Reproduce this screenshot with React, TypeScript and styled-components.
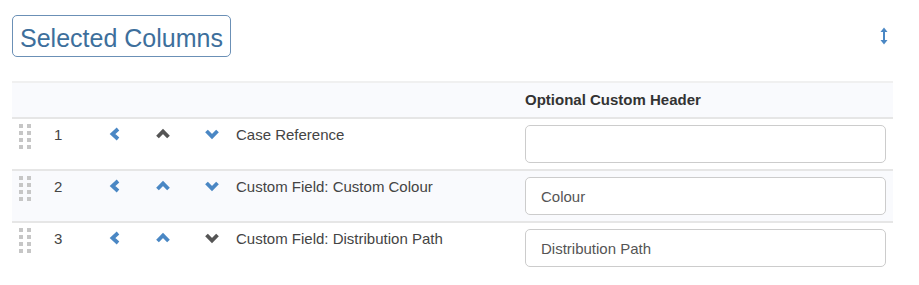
import React from "react";
import styled, { createGlobalStyle } from "styled-components";

const GlobalStyle = createGlobalStyle`
  html, body {
    margin: 0;
    padding: 0;
    background: #ffffff;
    font-family: "Liberation Sans", Arial, Helvetica, sans-serif;
    color: #333333;
  }
`;

const BLUE = "#4a87c4";
const GRAY = "#555555";
const COLS = "26px 62px 30px 66px 32px 290px 375px";

const Page = styled.div`
  width: 881px;
  padding: 15px 0 0 12px;
`;

const TopBar = styled.div`
  display: flex;
  justify-content: space-between;
  align-items: center;
  margin-bottom: 24px;
`;

const Title = styled.h2`
  margin: 0;
  display: inline-block;
  box-sizing: border-box;
  height: 42px;
  padding: 8px 7px 4px 7px;
  border: 1px solid #6b90b6;
  border-radius: 5px;
  font-size: 25px;
  line-height: 28px;
  font-weight: normal;
  color: #3d6f9c;
  white-space: nowrap;
`;

const ResizeButton = styled.span`
  display: flex;
  margin-right: 5px;
`;

const Table = styled.div`
  display: flex;
  flex-direction: column;
`;

const HeaderRow = styled.div`
  display: grid;
  grid-template-columns: ${COLS};
  border-top: 2px solid #f0f0f0;
  border-bottom: 2px solid #e6e6e6;
  background: #f9fafd;
  height: 34px;
  align-items: center;
`;

const HeaderCell = styled.div`
  grid-column: 7;
  padding: 0 7px;
  font-size: 15px;
  line-height: 20px;
  font-weight: bold;
  color: #333333;
`;

const Row = styled.div<{ $striped?: boolean }>`
  display: grid;
  grid-template-columns: ${COLS};
  height: 50px;
  align-items: start;
  background: ${(p) => (p.$striped ? "#f9fafd" : "#ffffff")};
  & + & {
    border-top: 2px solid #e6e6e6;
  }
`;

const HandleCell = styled.div`
  display: flex;
  justify-content: center;
  padding-top: 5px;
`;

const Dots = styled.div`
  display: grid;
  grid-template-columns: 4px 4px;
  grid-auto-rows: 4px;
  column-gap: 4px;
  row-gap: 3px;
`;

const Dot = styled.span`
  background: #c6c6c6;
`;

const NumberCell = styled.div`
  padding: 6px 0 0 16px;
  font-size: 15px;
  line-height: 20px;
  color: #444444;
`;

const IconCell = styled.div`
  display: flex;
  justify-content: center;
  padding-top: 7px;
`;

const NameCell = styled.div`
  padding: 6px 0 0 8px;
  font-size: 15px;
  line-height: 20px;
  color: #444444;
  white-space: nowrap;
`;

const InputCell = styled.div`
  padding: 6px 7px;
`;

const HeaderInput = styled.input`
  display: block;
  box-sizing: border-box;
  width: 100%;
  height: 38px;
  margin: 0;
  padding: 0 15px;
  border: 1px solid #cccccc;
  border-radius: 5px;
  background: #ffffff;
  font-family: "Liberation Sans", Arial, Helvetica, sans-serif;
  font-size: 15px;
  color: #555555;
  outline: none;
`;

type Dir = "left" | "up" | "down";

const chevronPoints: Record<Dir, string> = {
  left: "11,3 5.5,8 11,13",
  up: "2.5,11 8,5.5 13.5,11",
  down: "2.5,5 8,10.5 13.5,5",
};

const Chevron: React.FC<{ dir: Dir; active: boolean }> = ({ dir, active }) => (
  <svg width="16" height="16" viewBox="0 0 16 16" aria-hidden="true">
    <polyline
      points={chevronPoints[dir]}
      fill="none"
      stroke={active ? BLUE : GRAY}
      strokeWidth={3.8}
      strokeLinejoin="miter"
      strokeLinecap="butt"
    />
  </svg>
);

const ResizeIcon: React.FC = () => (
  <svg width="8" height="18" viewBox="0 0 8 18" aria-hidden="true">
    <rect x="3" y="4" width="2" height="10" fill={BLUE} />
    <polygon points="0.5,5 4,0.5 7.5,5" fill={BLUE} />
    <polygon points="0.5,13 4,17.5 7.5,13" fill={BLUE} />
  </svg>
);

const columns = [
  { n: 1, name: "Case Reference", header: "", canUp: false, canDown: true },
  { n: 2, name: "Custom Field: Custom Colour", header: "Colour", canUp: true, canDown: true },
  { n: 3, name: "Custom Field: Distribution Path", header: "Distribution Path", canUp: true, canDown: false },
];

export default function App() {
  return (
    <>
      <GlobalStyle />
      <Page>
        <TopBar>
          <Title>Selected Columns</Title>
          <ResizeButton>
            <ResizeIcon />
          </ResizeButton>
        </TopBar>
        <Table>
          <HeaderRow>
            <HeaderCell>Optional Custom Header</HeaderCell>
          </HeaderRow>
          {columns.map((c, i) => (
            <Row key={c.n} $striped={i % 2 === 1}>
              <HandleCell>
                <Dots>
                  {Array.from({ length: 8 }).map((_, k) => (
                    <Dot key={k} />
                  ))}
                </Dots>
              </HandleCell>
              <NumberCell>{c.n}</NumberCell>
              <IconCell>
                <Chevron dir="left" active />
              </IconCell>
              <IconCell>
                <Chevron dir="up" active={c.canUp} />
              </IconCell>
              <IconCell>
                <Chevron dir="down" active={c.canDown} />
              </IconCell>
              <NameCell>{c.name}</NameCell>
              <InputCell>
                <HeaderInput defaultValue={c.header} />
              </InputCell>
            </Row>
          ))}
        </Table>
      </Page>
    </>
  );
}
